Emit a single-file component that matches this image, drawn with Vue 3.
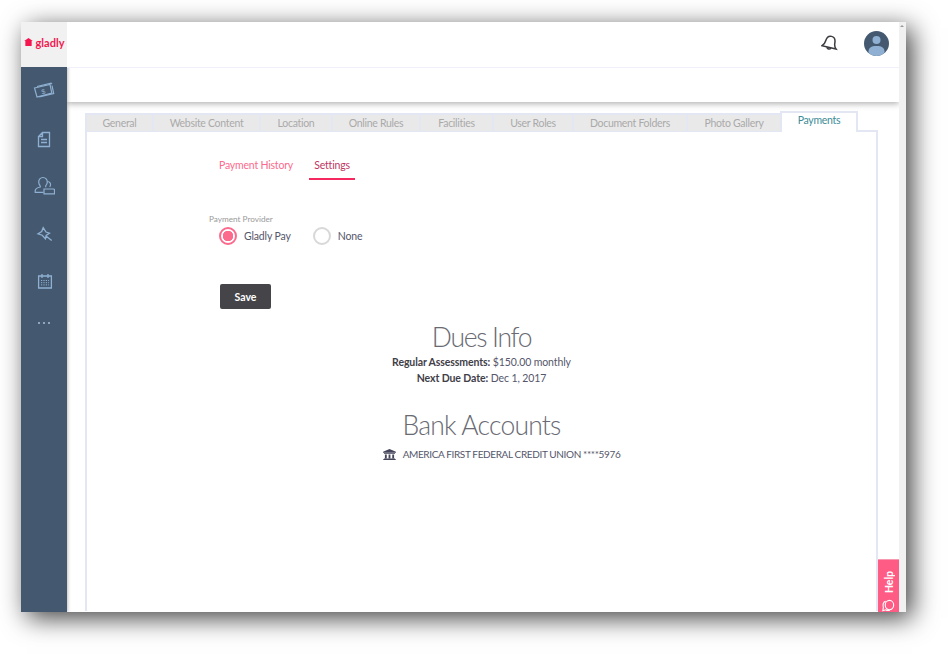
<script setup>
const tabs = [
  { label: 'General', w: 67 },
  { label: 'Website Content', w: 107 },
  { label: 'Location', w: 72 },
  { label: 'Online Rules', w: 88 },
  { label: 'Facilities', w: 73 },
  { label: 'User Roles', w: 80 },
  { label: 'Document Folders', w: 114 },
  { label: 'Photo Gallery', w: 94 },
]
</script>

<template>
  <div class="page">
    <div class="window">
      <aside class="sidebar">
        <div class="logo">
          <svg class="logo-mark" viewBox="0 0 10 10"><path d="M5 .6 9.800 4H8.500v5.400h-7V4H.2z" fill="#f5164f" /></svg>
          <span class="logo-text">gladly</span>
        </div>
        <nav class="nav">
          <svg class="nav-icon" viewBox="0 0 22 20" fill="none" stroke="#8fb0d2" stroke-width="1.200">
            <path d="M1.500 7 17 3.500l1.800 8.500L4 16z" />
            <path d="M4 5.500l14-3.300 1 1M19 4.500l1.700 8-14.500 3.300" />
            <text x="8.300" y="13.300" class="dollar" transform="rotate(-13 10 10)">$</text>
          </svg>
          <svg class="nav-icon" viewBox="0 0 22 20" fill="none" stroke="#8fb0d2" stroke-width="1.300">
            <path d="M9.500 3.500h7v14h-11V7.500zM9.500 3.500v4h-4M8 10.500h6M8 13.500h6" />
          </svg>
          <svg class="nav-icon" viewBox="0 0 22 20" fill="none" stroke="#8fb0d2" stroke-width="1.200">
            <path d="M10 1.500c2.600 0 4.400 2 4.300 4.700-.1 1.600-.8 2.800-1.600 3.600v1.500M7.300 9.800v1.200c-2.700.6-5.100 1.800-5.100 3.800v1.500h8.300" />
            <path d="M10 1.500C7.400 1.500 5.600 3.500 5.700 6.200c.1 1.500.7 2.800 1.600 3.600" />
            <path d="M14.500 5.500c2 .2 3.200 1.500 3 3.500-.1.800-.4 1.500-.8 2M11 13h9.500a1 1 0 0 1 1 1v3.800H11z" />
          </svg>
          <svg class="nav-icon" viewBox="0 0 22 20" fill="none" stroke="#8fb0d2" stroke-width="1.300">
            <path d="M10.200 3.700 13 8l3.500 1.200-3.400 2.300-.6 3.300-3.300-3.600-4.200-1.400L8.700 7.500zM13 12l5.700 4.600" />
          </svg>
          <svg class="nav-icon" viewBox="0 0 22 20" fill="none" stroke="#8fb0d2" stroke-width="1.300">
            <path d="M5.600 5h12.800v12H5.600zM9 3v4M15 3v4" />
            <path d="M8 9.500h8M8 11.700h8M8 13.900h8" stroke-width="1" stroke-dasharray="1.200 1.200" />
          </svg>
          <div class="dots"><i></i><i></i><i></i></div>
        </nav>
      </aside>

      <div class="main">
        <header class="topbar">
          <svg class="bell" viewBox="0 0 18 18" fill="none" stroke="#3c3c41" stroke-width="1.500">
            <g transform="rotate(13 9 9)">
              <path d="M1.800 13.500c1.800-1.500 2.400-3.300 2.500-5.700C4.500 4.500 6.400 2.200 9 2.200s4.500 2.300 4.700 5.600c.1 2.400.7 4.200 2.500 5.700z" />
              <path d="M7 13.700a2.100 2.100 0 0 0 4 0" />
            </g>
          </svg>
          <svg class="avatar" viewBox="0 0 25 25">
            <circle cx="12.500" cy="12.500" r="12.500" fill="#44596f" />
            <clipPath id="avatar-clip"><circle cx="12.500" cy="12.500" r="12.500" /></clipPath>
            <g clip-path="url(#avatar-clip)" fill="#8fb0d2">
              <circle cx="12.500" cy="9" r="4" />
              <path d="M4.500 25v-4.500c0-3.500 2.500-5.500 8-5.500s8 2 8 5.500V25z" />
            </g>
          </svg>
        </header>
        <div class="subbar"></div>

        <div class="body">
          <div class="tabstrip">
            <div v-for="t in tabs" :key="t.label" class="tab" :style="{ width: t.w + 'px' }">{{ t.label }}</div>
            <div class="tab active">Payments</div>
          </div>
          <section class="panel">
            <div class="subtabs">
              <span class="subtab">Payment History</span>
              <span class="subtab current">Settings</span>
            </div>

            <div class="field-label">Payment Provider</div>
            <div class="radios">
              <label class="radio"><span class="dot on"></span>Gladly Pay</label>
              <label class="radio"><span class="dot"></span>None</label>
            </div>

            <button class="save">Save</button>

            <h2 class="h-dues">Dues Info</h2>
            <p class="line"><b>Regular Assessments:</b> $150.00 monthly</p>
            <p class="line"><b>Next Due Date:</b> Dec 1, 2017</p>

            <h2 class="h-bank">Bank Accounts</h2>
            <div class="account">
              <svg class="bank" viewBox="0 0 14 12" fill="#44445a">
                <path d="M7 0 14 3v1H0V3zM1 4.700h12v.8H1zM2 6h2v4H2zM6 6h2v4H6zM10 6h2v4h-2zM1 10.300h12v.8H1zM0 11.200h14v.8H0z" />
              </svg>
              <span>AMERICA FIRST FEDERAL CREDIT UNION ****5976</span>
            </div>
          </section>
        </div>
      </div>

      <div class="scrollbar"><span class="arrow"></span></div>

      <div class="help">
        <span class="help-text">Help</span>
        <svg class="help-icon" viewBox="0 0 16 16" fill="none" stroke="#fff" stroke-width="1.200">
          <ellipse cx="9" cy="6.500" rx="4.500" ry="5" />
          <path d="M5 2.500C2.500 3 1.500 6 2.500 9l-.5 3.500 3-1c1.500 1 3 1 4.500.5" />
        </svg>
      </div>
    </div>
  </div>
</template>

<style>
html, body { margin: 0; background: #fff; }
</style>

<style scoped>
.page {
  width: 948px;
  height: 654px;
  padding: 22px 0 0 21px;
  box-sizing: border-box;
  overflow: hidden;
  font-family: Lato, "Open Sans", sans-serif;
}
.window {
  position: relative;
  display: flex;
  width: 885px;
  height: 590px;
  overflow: hidden;
  background: #fff;
}
.page::before {
  content: "";
  position: absolute;
  left: 21px;
  top: 22px;
  width: 885px;
  height: 590px;
  box-shadow: 6px 6px 24px rgba(0,0,0,.75);
}
.sidebar {
  flex: 0 0 46px;
  display: flex;
  flex-direction: column;
  background: #44596f;
  position: relative;
  z-index: 2;
  box-shadow: 1px 0 3px rgba(0,0,0,.25);
}
.logo {
  box-sizing: border-box;
  height: 45px;
  padding-bottom: 5px;
  background: #f1f1f1;
  display: flex;
  align-items: center;
  justify-content: center;
  gap: 3px;
}
.logo-mark { width: 9px; height: 10px; }
.logo-text {
  font-family: Lato, sans-serif;
  font-size: 11px;
  font-weight: 700;
  color: #f5164f;
}
.nav {
  display: flex;
  flex-direction: column;
  align-items: center;
  padding-top: 14px;
  gap: 27.500px;
}
.nav-icon { width: 22px; height: 20px; }
.dollar {
  font-family: "Liberation Sans", sans-serif;
  font-size: 7px;
  fill: #8fb0d2;
  stroke: none;
}
.dots { display: flex; gap: 3px; margin-top: 3px; }
.dots i { width: 2px; height: 2px; border-radius: 50%; background: #a9c1da; }
.main {
  flex: 0 0 832px;
  display: flex;
  flex-direction: column;
  min-width: 0;
}
.topbar {
  position: relative;
  z-index: 3;
  background: #fff;
  box-sizing: content-box;
  height: 43px;
  padding: 0 10px 2px 0;
  border-bottom: 1px solid #eff0f8;
  display: flex;
  align-items: center;
  justify-content: flex-end;
  gap: 25px;
}
.bell { width: 18px; height: 18px; margin-bottom: 2px; }
.avatar { width: 25px; height: 25px; }
.subbar {
  height: 34px;
  background: #fff;
  box-shadow: 0 2px 6px rgba(0,0,0,.3);
  position: relative;
}
.body {
  flex: 1;
  padding: 9px 0 0 18px;
  min-height: 0;
}
.tabstrip {
  display: flex;
  align-items: flex-end;
  height: 20px;
  position: relative;
  z-index: 1;
  width: 792px;
}
.tab {
  box-sizing: border-box;
  height: 18px;
  background: #e9e9e9;
  border: 2px solid #e3e7f4;
  border-width: 2px 0 0 2px;
  font-size: 10.500px;
  letter-spacing: -.3px;
  line-height: 16px;
  color: #a9a9a9;
  text-align: center;
  white-space: nowrap;
}
.tab.active {
  width: 78px;
  height: 21px;
  margin-bottom: -1px;
  background: #fff;
  color: #3d8c98;
  border-width: 2px 2px 0 2px;
  line-height: 15px;
}
.panel {
  box-sizing: border-box;
  width: 793px;
  height: 481px;
  border: 2px solid #e3e7f4;
  border-bottom: 0;
  background: #fff;
  margin-top: -1px;
  padding-top: 21px;
  text-align: center;
}
.subtabs {
  display: flex;
  padding-left: 132px;
  height: 29px;
}
.subtab {
  padding: 0;
  margin-right: 16px;
  font-size: 10.500px;
  letter-spacing: -.2px;
  line-height: 24px;
  color: #fc6a8d;
  white-space: nowrap;
}
.subtab.current {
  color: #c0365f;
  box-sizing: border-box;
  width: 46px;
  margin-right: 0;
  border-bottom: 2px solid #f5285f;
  height: 27px;
  text-align: center;
}
.field-label {
  margin-top: 31px;
  padding-left: 122px;
  text-align: left;
  font-size: 8.200px;
  line-height: 12px;
  color: #9a9a9a;
}
.radios {
  display: flex;
  gap: 22px;
  padding-left: 132px;
  margin-top: 2px;
}
.radio {
  display: flex;
  align-items: center;
  gap: 7px;
  font-size: 10.500px;
  letter-spacing: -.15px;
  color: #55566a;
  height: 18px;
}
.dot {
  box-sizing: border-box;
  width: 18px;
  height: 18px;
  border: 2px solid #d8d8d8;
  border-radius: 50%;
  background: #fff;
}
.dot.on {
  border-color: #fc6a8d;
  background: radial-gradient(circle, #fc6a8d 0 5px, #fff 5.500px);
}
.save {
  display: block;
  width: 51px;
  height: 25px;
  margin: 39px 0 0 133px;
  padding: 0;
  border: 0;
  border-radius: 2px;
  background: #454549;
  color: #fff;
  font: 700 10.500px Lato, sans-serif;
}
h2 {
  margin: 0;
  font-family: Lato, sans-serif;
  font-weight: 300;
  font-size: 26.500px;
  color: #696a72;
  line-height: 36px;
}
.h-dues { margin: 10px 0 -1px; letter-spacing: -1.300px; }
.h-bank { margin-top: 21px; letter-spacing: -.8px; }
.line {
  margin: 0;
  font-size: 10.500px;
  letter-spacing: -.1px;
  line-height: 16px;
  color: #55566a;
}
.line b { color: #3f4048; font-weight: 700; }
.account {
  display: flex;
  justify-content: center;
  align-items: center;
  gap: 7px;
  margin-top: 3px;
  padding-left: 40px;
  font-size: 10px;
  letter-spacing: -.37px;
  line-height: 16px;
  color: #55566a;
}
.bank { width: 13px; height: 11px; }
.scrollbar {
  flex: 0 0 7px;
  background: #f1f1f1;
  position: relative;
}
.arrow {
  position: absolute;
  left: 1px;
  top: 3px;
  border: 2.500px solid transparent;
  border-bottom-color: #9a9a9a;
  border-top: 0;
}
.help {
  position: absolute;
  left: 857px;
  top: 537px;
  width: 21px;
  height: 53px;
  background: #fe5c85;
  border-top: 1px solid #f59ab0;
  box-sizing: border-box;
  overflow: hidden;
  z-index: 4;
}
.help-text {
  position: absolute;
  left: 5px;
  top: 11px;
  writing-mode: vertical-rl;
  transform: rotate(180deg);
  font-size: 10.500px;
  line-height: 12px;
  font-weight: 700;
  color: #fff;
}
.help-icon {
  position: absolute;
  left: 3px;
  top: 39px;
  width: 15px;
  height: 15px;
}
</style>
